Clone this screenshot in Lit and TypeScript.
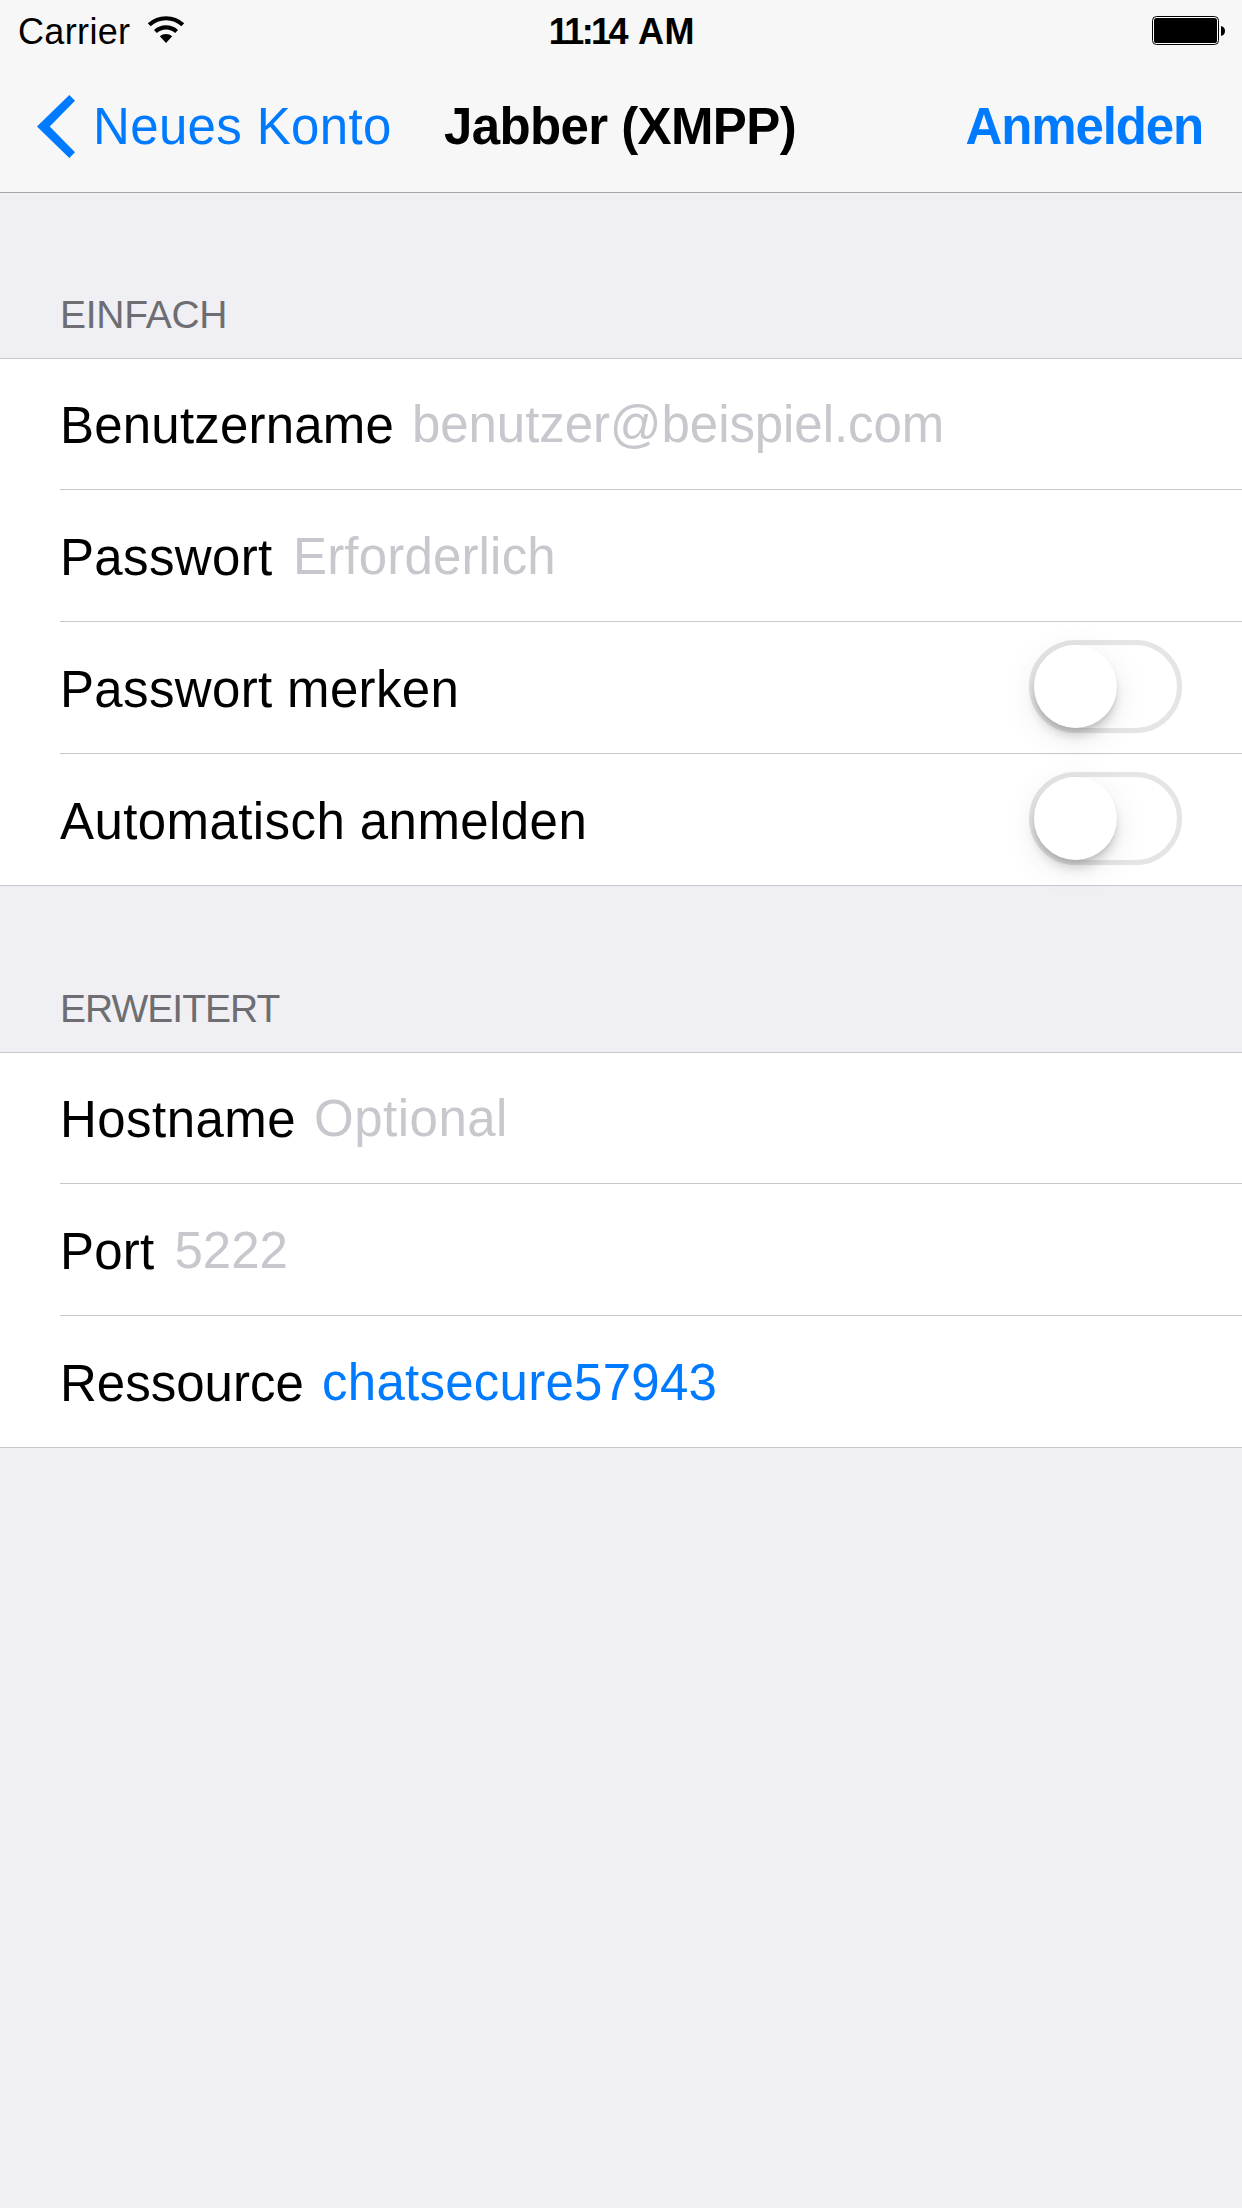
import { LitElement, html, css, nothing } from "lit";
import { customElement, property } from "lit/decorators.js";
import { styleMap } from "lit/directives/style-map.js";

interface FormRow {
  label: string;
  tracking: number;
  labelWidth?: number;
  placeholder?: string;
  value?: string;
  valueTracking?: number;
  toggle?: boolean;
}

interface FormSection {
  title: string;
  tracking: number;
  rows: FormRow[];
}

const SECTIONS: FormSection[] = [
  {
    title: "EINFACH",
    tracking: -0.25,
    rows: [
      { label: "Benutzername", tracking: 0.2, labelWidth: 352, placeholder: "benutzer@beispiel.com", valueTracking: -0.076 },
      { label: "Passwort", tracking: 0.35, labelWidth: 233, placeholder: "Erforderlich", valueTracking: 0.174 },
      { label: "Passwort merken", tracking: 0.35, toggle: true },
      { label: "Automatisch anmelden", tracking: 0.42, toggle: true },
    ],
  },
  {
    title: "ERWEITERT",
    tracking: -1,
    rows: [
      { label: "Hostname", tracking: 0.45, labelWidth: 254, placeholder: "Optional", valueTracking: 0.5 },
      { label: "Port", tracking: 0.21, labelWidth: 114.5, placeholder: "5222", valueTracking: 0 },
      { label: "Ressource", tracking: 0.01, labelWidth: 262, value: "chatsecure57943", valueTracking: 0.26 },
    ],
  },
];

const tracked = (px: number, width?: number) =>
  styleMap({ letterSpacing: `${px}px`, ...(width ? { width: `${width}px` } : {}) });

@customElement("status-bar")
class StatusBar extends LitElement {
  static styles = css`
    :host {
      display: grid;
      grid-template-columns: 1fr auto 1fr;
      height: 60px;
      padding: 0 16px 0 18px;
      font-size: 36px;
      line-height: 60px;
    }
    .left { display: flex; gap: 17px; }
    .carrier { letter-spacing: 0.35px; padding-top: 2px; }
    .wifi { display: block; width: 38px; height: 28px; margin-top: 15px; }
    .time { display: flex; gap: 12px; font-weight: 700; padding-top: 2px; }
    .clock { letter-spacing: -2.6px; }
    .meridiem { letter-spacing: 0.6px; }
    .right { display: flex; justify-content: flex-end; }
    .battery { display: block; width: 74px; height: 30px; margin-top: 16px; }
  `;
  render() {
    return html`
      <div class="left">
        <span class="carrier">Carrier</span>
        <svg class="wifi" viewBox="0 0 38 28">
          <path d="M2.2 9.8A24.8 24.8 0 0 1 35.8 9.8" fill="none" stroke="#000" stroke-width="4.2" />
          <path d="M8.4 16.5A15.8 15.8 0 0 1 29.6 16.5" fill="none" stroke="#000" stroke-width="4.2" />
          <path d="M19 28L12.8 21.3A9.2 9.2 0 0 1 25.2 21.3Z" />
        </svg>
      </div>
      <div class="time"><span class="clock">11:14</span><span class="meridiem">AM</span></div>
      <div class="right">
        <svg class="battery" viewBox="0 0 74 30">
          <rect x="0.5" y="0.5" width="66" height="28" rx="4" fill="#fff" stroke="#000" />
          <rect x="2" y="2" width="63" height="25" rx="2.6" />
          <path d="M69 10C71.8 10.6 73 12.6 73 15S71.8 19.4 69 20Z" />
        </svg>
      </div>
    `;
  }
}

@customElement("nav-bar")
class NavBar extends LitElement {
  static styles = css`
    :host {
      display: grid;
      grid-template-columns: 1fr auto 1fr;
      height: 132px;
      padding: 0 39px 0 37px;
      font-size: 51px;
      line-height: 134px;
    }
    .back { display: flex; color: #007aff; letter-spacing: 0.35px; gap: 18px; }
    .chevron { display: block; width: 38px; height: 63px; margin-top: 35px; fill: #007aff; }
    .title { font-weight: 700; letter-spacing: -0.6px; }
    .action { font-weight: 700; letter-spacing: -1.13px; color: #007aff; text-align: right; }
  `;
  render() {
    return html`
      <div class="back">
        <svg class="chevron" viewBox="0 0 38 63">
          <path d="M32.3 0L38 5.8L12.7 31.5L38 57.2L32.3 63L0 31.5Z" />
        </svg>
        <span>Neues Konto</span>
      </div>
      <div class="title">Jabber (XMPP)</div>
      <div class="action">Anmelden</div>
    `;
  }
}

@customElement("toggle-switch")
class ToggleSwitch extends LitElement {
  static styles = css`
    :host { display: block; }
    .track {
      box-sizing: border-box;
      display: flex;
      width: 153px;
      height: 93px;
      border: 5px solid #e5e5e5;
      border-radius: 47px;
    }
    .knob {
      width: 83px;
      height: 83px;
      border-radius: 50%;
      background: #fff;
      box-shadow: 0 9px 10px rgba(0, 0, 0, 0.13), 0 3px 3px rgba(0, 0, 0, 0.07), 0 9px 36px rgba(0, 0, 0, 0.09);
    }
  `;
  render() {
    return html`<div class="track"><div class="knob"></div></div>`;
  }
}

@customElement("form-section")
class FormSectionElement extends LitElement {
  @property({ attribute: false }) section!: FormSection;
  static styles = css`
    :host { display: block; }
    .header {
      box-sizing: border-box;
      height: 165px;
      padding: 99px 60px 0;
      font-size: 39px;
      line-height: 45px;
      color: #6d6d72;
    }
    .group {
      display: flex;
      flex-direction: column;
      box-sizing: border-box;
      height: 528px;
      background: #fff;
      border-top: 1px solid #c8c7cc;
      border-bottom: 1px solid #c8c7cc;
    }
    .group.three { height: 396px; }
    .row {
      display: flex;
      box-sizing: border-box;
      height: 132px;
      margin-left: 60px;
      padding-right: 60px;
      border-bottom: 1px solid #c8c7cc;
      font-size: 51px;
      line-height: 131px;
      white-space: nowrap;
    }
    .row:first-child { height: 131px; line-height: 130px; }
    .row:last-child { height: 131px; border-bottom: 0; }
    .label { padding-top: 2px; }
    .placeholder, .value { padding-top: 1px; }
    .placeholder { color: #c7c7cd; }
    .value { color: #007aff; }
    .switch { margin: 18px 0 0 auto; }
  `;
  render() {
    const { title, tracking, rows } = this.section;
    return html`
      <div class="header" style=${tracked(tracking)}>${title}</div>
      <div class="group ${rows.length === 3 ? "three" : ""}">
        ${rows.map(
          (r) => html`<div class="row">
            <span class="label" style=${tracked(r.tracking, r.labelWidth)}>${r.label}</span>
            ${r.placeholder ? html`<span class="placeholder" style=${tracked(r.valueTracking ?? 0)}>${r.placeholder}</span>` : nothing}
            ${r.value ? html`<span class="value" style=${tracked(r.valueTracking ?? 0)}>${r.value}</span>` : nothing}
            ${r.toggle ? html`<toggle-switch class="switch"></toggle-switch>` : nothing}
          </div>`
        )}
      </div>
    `;
  }
}

@customElement("app-root")
class AppRoot extends LitElement {
  static styles = css`
    :host {
      display: block;
      box-sizing: border-box;
      width: 100%;
      min-height: 2208px;
      background: #efeff4;
      color: #000;
      font-family: "Liberation Sans", Arial, sans-serif;
    }
    .top { background: #f7f7f7; border-bottom: 1px solid #a7a7aa; }
    .sections { display: flex; flex-direction: column; gap: 1px; }
  `;
  render() {
    return html`
      <div class="top">
        <status-bar></status-bar>
        <nav-bar></nav-bar>
      </div>
      <div class="sections">
        ${SECTIONS.map((s) => html`<form-section .section=${s}></form-section>`)}
      </div>
    `;
  }
}
